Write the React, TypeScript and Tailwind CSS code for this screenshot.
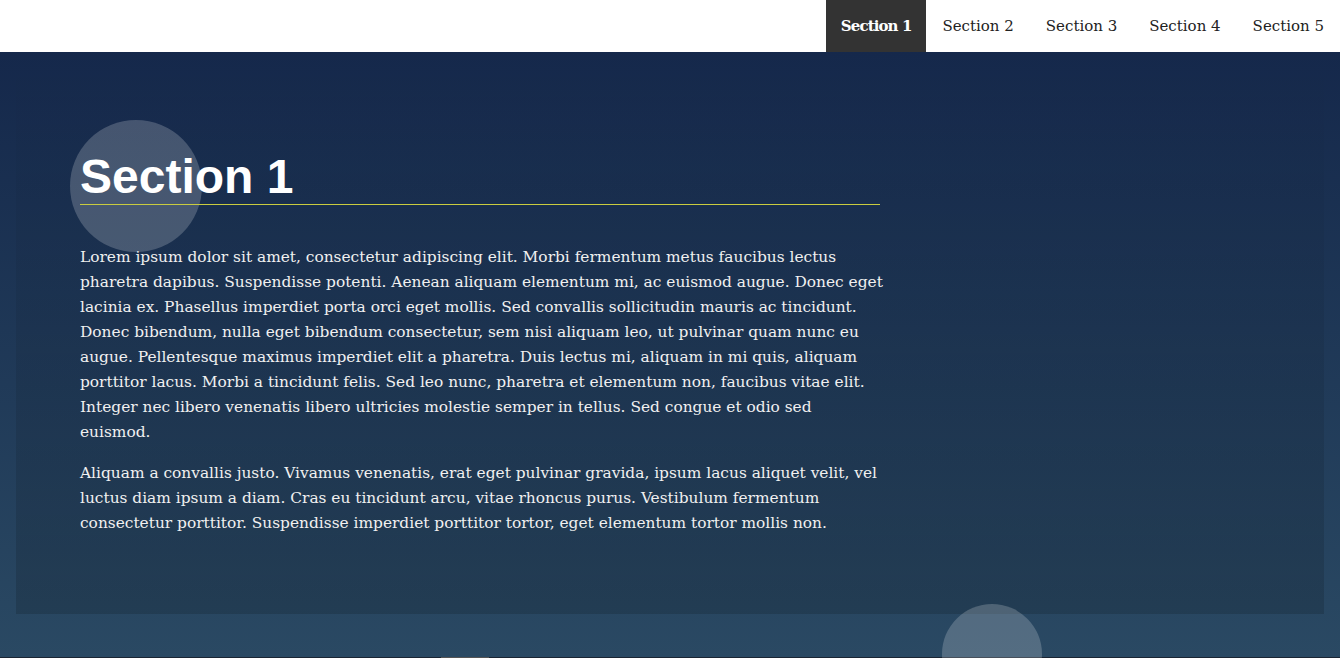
const navItems = ["Section 1", "Section 2", "Section 3", "Section 4", "Section 5"];

// lines kept as in the design so the wrap matches
const paragraphs = [
  [
    "Lorem ipsum dolor sit amet, consectetur adipiscing elit. Morbi fermentum metus faucibus lectus",
    "pharetra dapibus. Suspendisse potenti. Aenean aliquam elementum mi, ac euismod augue. Donec eget",
    "lacinia ex. Phasellus imperdiet porta orci eget mollis. Sed convallis sollicitudin mauris ac tincidunt.",
    "Donec bibendum, nulla eget bibendum consectetur, sem nisi aliquam leo, ut pulvinar quam nunc eu",
    "augue. Pellentesque maximus imperdiet elit a pharetra. Duis lectus mi, aliquam in mi quis, aliquam",
    "porttitor lacus. Morbi a tincidunt felis. Sed leo nunc, pharetra et elementum non, faucibus vitae elit.",
    "Integer nec libero venenatis libero ultricies molestie semper in tellus. Sed congue et odio sed",
    "euismod.",
  ],
  [
    "Aliquam a convallis justo. Vivamus venenatis, erat eget pulvinar gravida, ipsum lacus aliquet velit, vel",
    "luctus diam ipsum a diam. Cras eu tincidunt arcu, vitae rhoncus purus. Vestibulum fermentum",
    "consectetur porttitor. Suspendisse imperdiet porttitor tortor, eget elementum tortor mollis non.",
  ],
];

export default function App() {
  return (
    <div className="h-[658px] overflow-hidden font-['DejaVu_Serif',serif]">
      <nav className="flex h-[52px] justify-end bg-white">
        {navItems.map((item, i) => (
          <a
            key={item}
            href="#"
            className={
              i === 0
                ? "flex items-center bg-[#333333] px-[15px] text-[15px] font-bold tracking-[-0.9px] text-white"
                : "flex items-center px-4 text-[15px] text-[#222]"
            }
          >
            {item}
          </a>
        ))}
      </nav>

      <main className="relative bg-gradient-to-b from-[#15284b] to-[#2a4963] px-4">
        <section className="relative h-[562px] bg-gradient-to-b from-transparent to-black/15 pl-16 pt-[97px]">
          {/* decorative bubble behind heading */}
          <div className="absolute left-[54px] top-[68px] h-[132px] w-[132px] rounded-full bg-white/20" />
          <h1 className="relative w-[800px] border-b border-[#c9cc3f] font-['Liberation_Sans',Arial,sans-serif] text-[48px] font-bold leading-[55px] text-white">
            Section 1
          </h1>
          <div className="relative mt-10 w-[800px] whitespace-nowrap text-[15.4px] leading-[25px] text-[#f0f0f0]">
            {paragraphs.map((lines, i) => (
              <p key={i} className="mb-4">
                {lines.map((line, j) => (
                  <span key={j} className="block">
                    {line}
                  </span>
                ))}
              </p>
            ))}
          </div>
        </section>
        <div className="h-[43px]" />
        <div className="absolute left-[942px] top-[552px] h-[100px] w-[100px] rounded-full bg-white/20" />
      </main>
      <div className="flex h-px bg-[#1a2533]">
        <div className="ml-[441px] w-[48px] bg-[#555]" />
      </div>
    </div>
  );
}
